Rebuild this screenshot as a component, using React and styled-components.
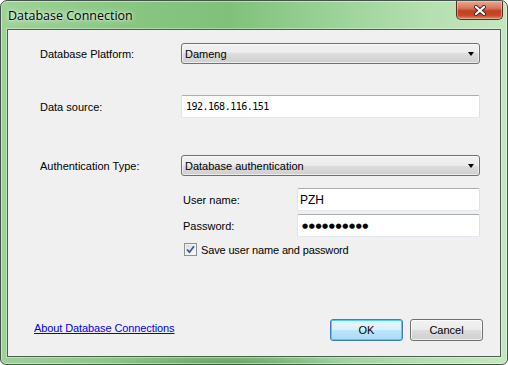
import React from "react";
import styled, { createGlobalStyle } from "styled-components";

const Global = createGlobalStyle`
  html, body { margin: 0; padding: 0; background: #ffffff; }
  body { font-family: "Liberation Sans", Arial, sans-serif; font-size: 11px; color: #000; }
`;

const Window = styled.div`
  box-sizing: border-box;
  width: 508px;
  height: 365px;
  display: flex;
  flex-direction: column;
  padding: 0 6px 7px 6px;
  border: 1px solid #44524a;
  border-radius: 7px 7px 6px 6px;
  background:
    radial-gradient(ellipse 60px 14px at 52% 12%, rgba(70, 130, 65, 0.45), rgba(70, 130, 65, 0) 100%),
    radial-gradient(ellipse 120px 10px at 45% 100%, rgba(70, 130, 65, 0.45), rgba(70, 130, 65, 0) 100%),
    linear-gradient(to right, #9ed298 0%, #88c682 25%, #80c17a 45%, #9ad297 65%, #b6e0b1 85%, #c4e7bf 100%);
  box-shadow: inset 0 0 0 1px rgba(255, 255, 255, 0.45);
  overflow: hidden;
`;

const TitleBar = styled.div`
  height: 28px;
  flex: none;
  display: flex;
  align-items: flex-start;
  justify-content: space-between;
`;

const Title = styled.div`
  padding: 6px 0 0 1px;
  font-family: "Open Sans", "Liberation Sans", sans-serif;
  font-size: 12.5px;
  line-height: 17px;
  color: #000;
  text-shadow: 0 0 6px rgba(255, 255, 255, 0.9), 0 0 3px rgba(255, 255, 255, 0.8);
`;

const CloseButton = styled.div`
  box-sizing: border-box;
  width: 47px;
  height: 19px;
  margin-right: -2px;
  display: flex;
  align-items: center;
  justify-content: center;
  border: 1px solid #5b2b22;
  border-top: none;
  border-radius: 0 0 5px 5px;
  background: linear-gradient(to bottom, #e9a997 0%, #d8755c 40%, #c2411f 55%, #c9482a 80%, #de8a6e 100%);
  box-shadow: inset 0 0 0 1px rgba(255, 220, 210, 0.45);
`;

const Client = styled.div`
  flex: 1;
  display: flex;
  flex-direction: column;
  background: #f0f0f0;
  border: 1px solid #4e5e52;
  box-shadow: 0 0 0 1px rgba(255, 255, 255, 0.35);
  padding: 13px 0 15px 0;
`;

const Form = styled.div`
  display: flex;
  flex-direction: column;
  padding: 0 20px 0 32px;
`;

const Row = styled.div`
  display: grid;
  grid-template-columns: 141px 1fr;
  align-items: center;
  margin-top: ${(p) => p.$gap || 0}px;
`;

const Label = styled.span`
  white-space: nowrap;
  padding-left: ${(p) => p.$indent || 0}px;
`;

const Combo = styled.div`
  box-sizing: border-box;
  height: 21px;
  display: flex;
  align-items: center;
  justify-content: space-between;
  padding: 0 5px 0 3px;
  border: 1px solid #707070;
  border-radius: 3px;
  background: linear-gradient(to bottom, #f2f2f2 0%, #ebebeb 50%, #dddddd 50%, #cfcfcf 100%);
  box-shadow: inset 0 0 0 1px rgba(255, 255, 255, 0.6);
`;

const Arrow = styled.span`
  width: 0;
  height: 0;
  border-left: 3.5px solid transparent;
  border-right: 3.5px solid transparent;
  border-top: 4px solid #000;
  margin-top: 1px;
`;

const TextBox = styled.div`
  box-sizing: border-box;
  height: 23px;
  display: flex;
  align-items: center;
  padding: 0 ${(p) => (p.$mono ? 4 : 2)}px;
  background: #fff;
  border: 1px solid;
  border-color: #abadb3 #dbdfe6 #e3e9ef #e2e3ea;
  border-radius: 2px;
  font-family: ${(p) => (p.$mono ? '"DejaVu Sans Mono", monospace' : '"Liberation Sans", Arial, sans-serif')};
  font-size: ${(p) => (p.$mono ? "10px" : "12px")};
  letter-spacing: ${(p) => (p.$mono ? "-0.5px" : "0")};
`;

const Dots = styled.span`
  font-family: "DejaVu Sans", sans-serif;
  font-size: 7px;
  letter-spacing: 0.6px;
  padding-left: 2px;
`;

const Credentials = styled.div`
  display: flex;
  flex-direction: column;
  margin-top: 12px;
  margin-left: 141px;
`;

const CredRow = styled.div`
  display: grid;
  grid-template-columns: 116px 1fr;
  align-items: center;
  margin-top: ${(p) => p.$gap || 0}px;
`;

const CheckRow = styled.label`
  display: flex;
  align-items: center;
  gap: 4px;
  margin-top: 6px;
  padding-left: 3px;
  letter-spacing: -0.15px;
`;

const CheckBox = styled.span`
  box-sizing: border-box;
  width: 13px;
  height: 13px;
  flex: none;
  border: 1px solid #8e8f8f;
  background: linear-gradient(135deg, #d3d7dc 0%, #eceef0 55%, #fbfbfb 100%);
  box-shadow: inset 0 0 0 1px #f4f4f4;
  display: flex;
  align-items: center;
  justify-content: center;
`;

const Footer = styled.div`
  margin-top: auto;
  display: flex;
  align-items: center;
  justify-content: space-between;
  padding: 0 17px 0 26px;
`;

const Link = styled.a`
  color: #0000ff;
  text-decoration: underline;
  cursor: pointer;
  margin-top: -4px;
  letter-spacing: -0.1px;
`;

const Buttons = styled.div`
  display: flex;
  gap: 7px;
`;

const Button = styled.button`
  box-sizing: border-box;
  width: 73px;
  height: 22px;
  padding: 0;
  font-family: "Liberation Sans", Arial, sans-serif;
  font-size: 11px;
  color: #000;
  border-radius: 3px;
  border: 1px solid ${(p) => (p.$default ? "#3c7fb1" : "#707070")};
  background: ${(p) =>
    p.$default
      ? "linear-gradient(to bottom, #eaf6fd 0%, #d9f0fc 50%, #bee6fd 50%, #a7d9f5 100%)"
      : "linear-gradient(to bottom, #f2f2f2 0%, #ebebeb 50%, #dddddd 50%, #cfcfcf 100%)"};
  box-shadow: ${(p) =>
    p.$default
      ? "inset 0 0 0 1px #48d2f5"
      : "inset 0 0 0 1px rgba(255,255,255,0.7)"};
`;

export default function App() {
  return (
    <>
      <Global />
      <Window>
        <TitleBar>
          <Title>Database Connection</Title>
          <CloseButton>
            <svg width="14" height="11" viewBox="0 0 14 11">
              <path d="M3 2 L11 9 M11 2 L3 9" stroke="#3b2a2a" strokeWidth="4" strokeLinecap="round" />
              <path d="M3 2 L11 9 M11 2 L3 9" stroke="#ffffff" strokeWidth="2.2" strokeLinecap="round" />
            </svg>
          </CloseButton>
        </TitleBar>
        <Client>
          <Form>
            <Row>
              <Label>Database Platform:</Label>
              <Combo>
                <span>Dameng</span>
                <Arrow />
              </Combo>
            </Row>
            <Row $gap={31}>
              <Label>Data source:</Label>
              <TextBox $mono>192.168.116.151</TextBox>
            </Row>
            <Row $gap={37}>
              <Label>Authentication Type:</Label>
              <Combo>
                <span>Database authentication</span>
                <Arrow />
              </Combo>
            </Row>
            <Credentials>
              <CredRow>
                <Label $indent={2}>User name:</Label>
                <TextBox>PZH</TextBox>
              </CredRow>
              <CredRow $gap={3}>
                <Label $indent={2}>Password:</Label>
                <TextBox>
                  <Dots>●●●●●●●●●●</Dots>
                </TextBox>
              </CredRow>
              <CheckRow>
                <CheckBox>
                  <svg width="9" height="9" viewBox="0 0 9 9">
                    <path d="M1 4.5 L3.5 7.2 L8 1.2" fill="none" stroke="#3d5a8a" strokeWidth="1.8" />
                  </svg>
                </CheckBox>
                <span>Save user name and password</span>
              </CheckRow>
            </Credentials>
          </Form>
          <Footer>
            <Link>About Database Connections</Link>
            <Buttons>
              <Button $default>OK</Button>
              <Button>Cancel</Button>
            </Buttons>
          </Footer>
        </Client>
      </Window>
    </>
  );
}
